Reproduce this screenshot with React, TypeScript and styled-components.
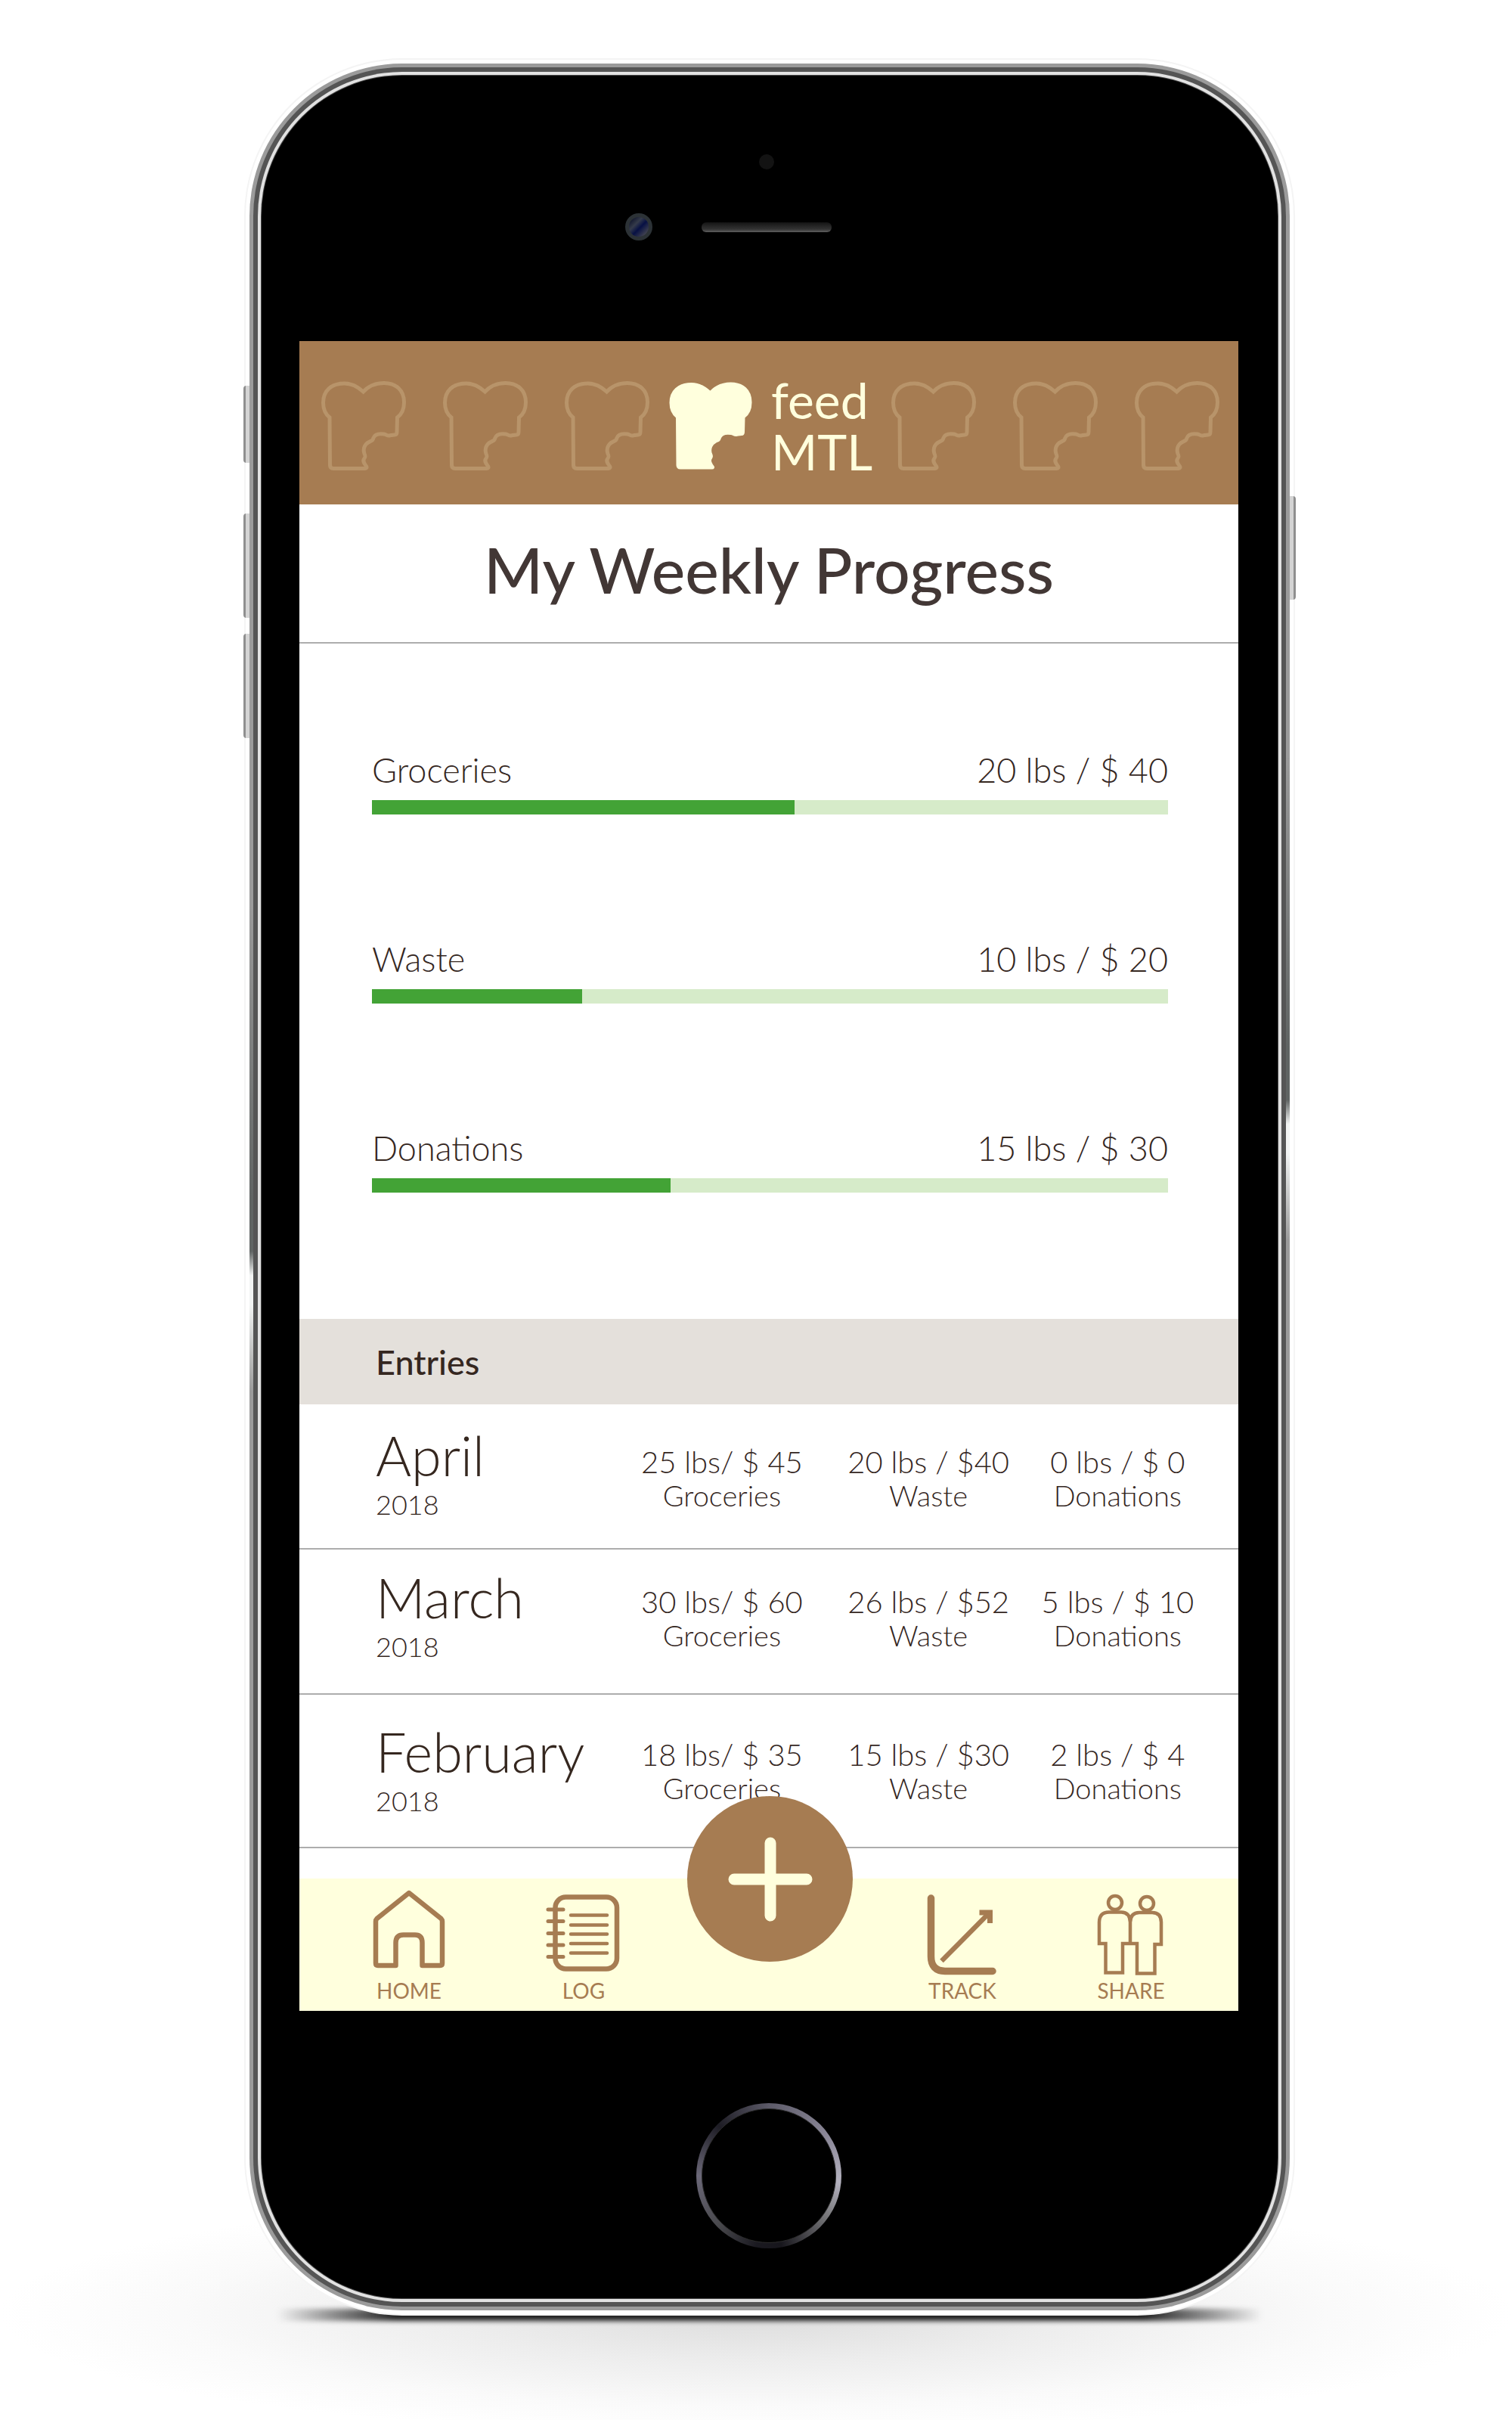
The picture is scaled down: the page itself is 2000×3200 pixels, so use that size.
import React from "react";
import styled, { createGlobalStyle, css } from "styled-components";

const colors = {
  brown: "#a67c52",
  crust: "#b8946a",
  cream: "#ffffdd",
  ink: "#35271f",
  title: "#423735",
  green: "#43a336",
  mint: "#d6ebc9",
  stone: "#e4e0db",
  line: "#adadad",
};

const GlobalStyle = createGlobalStyle`
  *, *::before, *::after { box-sizing: border-box; }
  body {
    margin: 0;
    background: #fff;
    color: ${colors.ink};
    font-family: Lato, "Open Sans", sans-serif;
    font-weight: 300;
  }
`;

const Page = styled.div`
  position: relative;
  overflow: hidden;
  display: flex;
  justify-content: center;
  padding: 100px 24px 161px 60px;
`;

const Floor = styled.div`
  position: absolute;
  left: 0;
  right: 0;
  bottom: 0;
  height: 320px;
  background: radial-gradient(ellipse 50% 50% at 50% 56%, #dcdcdc 0%, #ededed 40%, #fafafa 76%, #ffffff 100%);
`;

const Phone = styled.div`
  position: relative;
  width: 100%;
  max-width: 1344px;
`;

const ContactShadow = styled.div`
  position: absolute;
  left: 20px;
  right: 20px;
  bottom: -30px;
  height: 16px;
  background: linear-gradient(90deg, transparent, #222 12%, #222 88%, transparent);
  filter: blur(3px);
`;

const SideKey = styled.div<{ $side: "left" | "right"; $top: number; $length: number }>`
  position: absolute;
  top: ${(p) => p.$top}px;
  height: ${(p) => p.$length}px;
  width: 8px;
  background: linear-gradient(${(p) => (p.$side === "left" ? 90 : 270)}deg, #8f8f8f 38%, #d4d4d4 39%);
  ${(p) =>
    p.$side === "left"
      ? css`
          left: -24px;
          border-radius: 4px 0 0 4px;
        `
      : css`
          right: -24px;
          border-radius: 0 4px 4px 0;
        `}
`;

const EdgeGlint = styled.div<{ $side: "left" | "right"; $top: number }>`
  position: absolute;
  top: ${(p) => p.$top}px;
  ${(p) => p.$side}: -16px;
  width: 5px;
  height: 640px;
  background: linear-gradient(#9b9b9b 0%, #606463 60%, #606463 71%, #f2f4f3 76%, #f2f4f3 82%, #9b9b9b 100%);
`;

const Body = styled.div`
  position: relative;
  padding: 0 52px 0 50px;
  border-radius: 186px;
  background: #000;
  box-shadow:
    0 0 0 1px #4a4a4a,
    0 0 0 5px #e2e2e2,
    0 0 0 11px #555,
    0 0 0 16px #9b9b9b,
    0 0 0 21px #fff,
    0 0 0 23px #f4f4f4;
`;

const Forehead = styled.div`
  display: flex;
  flex-direction: column;
  align-items: center;
  gap: 58px;
  height: 351px;
  padding: 104px 6px 0 0;
`;

const Sensor = styled.div`
  width: 20px;
  height: 20px;
  border-radius: 50%;
  background: #131313;
`;

const EarpieceRow = styled.div`
  display: grid;
  grid-template-columns: 1fr 172px 1fr;
  align-items: center;
  column-gap: 65px;
  width: 100%;
`;

const Camera = styled.div`
  justify-self: end;
  width: 36px;
  height: 36px;
  border: 5px solid #2c3236;
  border-radius: 50%;
  background: linear-gradient(135deg, #10152c 10%, #353b4a 35%, #071044 55%, #4a4a52 90%);
`;

const Speaker = styled.div`
  height: 13px;
  border-radius: 6px;
  background: linear-gradient(#141414, #333 70%, #606060);
`;

const Chin = styled.div`
  display: flex;
  justify-content: center;
  height: 380px;
  padding-top: 122px;
`;

const HomeButton = styled.button`
  width: 192px;
  height: 192px;
  padding: 7px;
  border: 0;
  border-radius: 50%;
  background: conic-gradient(#5c5a68, #8f8c9c 60deg, #b4b2bf 95deg, #77777a 125deg, #17161c 170deg, #1a1920 190deg, #48484c 225deg, #6b6878 270deg, #1d1c24 315deg, #5c5a68);

  &::before {
    content: "";
    display: block;
    height: 100%;
    border: 1px solid #2c2c2c;
    border-radius: 50%;
    background: #000;
  }
`;

const Screen = styled.div`
  display: flex;
  flex-direction: column;
  background: #fff;
`;

const Header = styled.header`
  display: flex;
  align-items: center;
  justify-content: space-between;
  height: 216px;
  padding: 8px 25px 0 29px;
  background: ${colors.brown};
`;

const Loaves = styled.div`
  display: flex;
  gap: 49px;
`;

const Bread = styled.svg<{ $solid?: boolean }>`
  display: block;
  flex: none;
  width: 112px;
  height: 118px;
  fill: ${(p) => (p.$solid ? colors.cream : "none")};
  stroke: ${(p) => (p.$solid ? colors.cream : colors.crust)};
  stroke-width: ${(p) => (p.$solid ? 2 : 5)};
`;

const Brand = styled.a`
  display: flex;
  align-items: center;
  gap: 24px;
  color: ${colors.cream};
  font-size: 66px;
  font-weight: 400;
  line-height: 68px;
  text-decoration: none;
`;

const BrandWord = styled.span`
  display: block;
`;

const Title = styled.h1`
  display: flex;
  align-items: center;
  justify-content: center;
  height: 184px;
  margin: 0;
  padding-bottom: 12px;
  border-bottom: 2px solid ${colors.line};
  color: ${colors.title};
  font-size: 84px;
  font-weight: 500;
`;

const Goals = styled.section`
  display: flex;
  flex-direction: column;
  gap: 167px;
  padding: 143px 93px 167px 96px;
`;

const Goal = styled.div`
  display: flex;
  flex-direction: column;
  gap: 16px;
`;

const GoalText = styled.div`
  display: flex;
  justify-content: space-between;
  font-size: 45px;
  line-height: 48px;
`;

const Track = styled.div`
  height: 19px;
  background: ${colors.mint};
`;

const Fill = styled.div`
  height: 100%;
  background: ${colors.green};
`;

const EntriesHeading = styled.h2`
  margin: 0;
  padding: 2px 0 0 101px;
  background: ${colors.stone};
  font-size: 45px;
  font-weight: 500;
  line-height: 111px;
`;

const EntriesTable = styled.table`
  width: 100%;
  margin-bottom: 40px;
  border-spacing: 0;
  table-layout: fixed;
`;

const MonthCell = styled.th`
  width: 34%;
  height: 192px;
  padding: 20px 0 0 101px;
  border-bottom: 2px solid ${colors.line};
  font-weight: 300;
  text-align: left;
  vertical-align: top;

  tr:first-child > & {
    padding-top: 24px;
  }

  tr:last-child > & {
    height: 203px;
    padding-top: 32px;
  }
`;

const StatCell = styled.td`
  width: 22%;
  padding: 47px 0 0;
  border-bottom: 2px solid ${colors.line};
  text-align: center;
  vertical-align: top;

  &:last-child {
    padding-right: 46px;
  }

  tr:first-child > & {
    padding-top: 54px;
  }

  tr:last-child > & {
    padding-top: 57px;
  }
`;

const Month = styled.div`
  font-size: 72px;
  line-height: 86px;
`;

const Year = styled.div`
  font-size: 36px;
  line-height: 44px;
`;

const Amount = styled.div`
  font-size: 40px;
  line-height: 44px;
`;

const Kind = styled.div`
  font-size: 38px;
  line-height: 44px;
`;

const TabBar = styled.nav`
  display: grid;
  grid-template-columns: 200fr 262fr 230fr 280fr 166fr;
  height: 175px;
  padding: 0 59px 0 45px;
  background: ${colors.cream};
`;

const Tab = styled.a`
  display: flex;
  flex-direction: column;
  align-items: center;
  padding-top: 15px;
  color: ${colors.brown};
  font-size: 28px;
  font-weight: 400;
  line-height: 32px;
  text-decoration: none;
`;

const TabIcon = styled.svg`
  display: block;
  width: 104px;
  height: 117px;
  fill: none;
  stroke: currentColor;
`;

const AddSlot = styled.div`
  position: relative;
`;

const AddButton = styled.button`
  position: absolute;
  top: -109px;
  left: 50%;
  display: grid;
  place-items: center;
  width: 219px;
  height: 219px;
  margin-left: -109px;
  padding: 0;
  border: 0;
  border-radius: 50%;
  background: ${colors.brown};
`;

const PlusIcon = styled.svg`
  width: 112px;
  height: 112px;
  stroke: ${colors.cream};
  stroke-width: 15;
  stroke-linecap: round;
`;

function Loaf({ solid }: { solid?: boolean }) {
  return (
    <Bread $solid={solid} viewBox="0 0 112 118" aria-hidden="true">
      <path d="M55.5 14C49 8 41 3 30.5 3C13 3 2.500 13 2.500 28.500C2.500 37 6 44 11 48L11.500 111C11.500 114 13 115.500 16 115.500H58C60 115.500 60.500 114 59.500 112.500C56 108 54.500 105 57 102C58.500 100 58.500 99 57 96C54.500 89 58 83 63 80.500C67.500 78.500 68 78.500 69 75C71 69.500 76 69 83 70C86 70.500 87 72.500 90 72C93 71.500 94 71 97 71C99 71 100 70 100 67L100.500 48C106 44 109.500 37 109.500 28C109.500 12 99 2.500 82.500 2.500C71 2.500 62 7 55.500 14Z" />
    </Bread>
  );
}

const goals = [
  { name: "Groceries", amount: "20 lbs / $ 40", percent: 53.1 },
  { name: "Waste", amount: "10 lbs / $ 20", percent: 26.4 },
  { name: "Donations", amount: "15 lbs / $ 30", percent: 37.5 },
];

const entries = [
  { month: "April", year: "2018", stats: [["25 lbs/ $ 45", "Groceries"], ["20 lbs / $40", "Waste"], ["0 lbs / $ 0", "Donations"]] },
  { month: "March", year: "2018", stats: [["30 lbs/ $ 60", "Groceries"], ["26 lbs / $52", "Waste"], ["5 lbs / $ 10", "Donations"]] },
  { month: "February", year: "2018", stats: [["18 lbs/ $ 35", "Groceries"], ["15 lbs / $30", "Waste"], ["2 lbs / $ 4", "Donations"]] },
];

export default function App() {
  return (
    <>
      <GlobalStyle />
      <Page>
        <Floor />
        <Phone>
          <ContactShadow />
          <Body>
            <Forehead>
              <Sensor />
              <EarpieceRow>
                <Camera />
                <Speaker />
              </EarpieceRow>
            </Forehead>

            <Screen>
              <Header>
                <Loaves>
                  <Loaf />
                  <Loaf />
                  <Loaf />
                </Loaves>
                <Brand href="#">
                  <Loaf solid />
                  <span>
                    <BrandWord>feed</BrandWord>
                    <BrandWord>MTL</BrandWord>
                  </span>
                </Brand>
                <Loaves>
                  <Loaf />
                  <Loaf />
                  <Loaf />
                </Loaves>
              </Header>

              <main>
                <Title>My Weekly Progress</Title>

                <Goals>
                  {goals.map((goal) => (
                    <Goal key={goal.name}>
                      <GoalText>
                        <span>{goal.name}</span>
                        <span>{goal.amount}</span>
                      </GoalText>
                      <Track role="progressbar" aria-label={goal.name} aria-valuenow={goal.percent}>
                        <Fill style={{ width: `${goal.percent}%` }} />
                      </Track>
                    </Goal>
                  ))}
                </Goals>

                <EntriesHeading id="entries">Entries</EntriesHeading>
                <EntriesTable aria-labelledby="entries">
                  <tbody>
                    {entries.map((entry) => (
                      <tr key={entry.month}>
                        <MonthCell scope="row">
                          <Month>{entry.month}</Month>
                          <Year>{entry.year}</Year>
                        </MonthCell>
                        {entry.stats.map(([amount, kind]) => (
                          <StatCell key={kind}>
                            <Amount>{amount}</Amount>
                            <Kind>{kind}</Kind>
                          </StatCell>
                        ))}
                      </tr>
                    ))}
                  </tbody>
                </EntriesTable>
              </main>

              <TabBar>
                <Tab href="#home">
                  <TabIcon viewBox="0 0 104 117" strokeWidth="6.500" strokeLinejoin="round" aria-hidden="true">
                    <path d="M52 4L9.500 38Q8 39.500 8 42V97Q8 100 11 100H34.500V70Q34.500 59.500 44.500 59.500H60Q69.500 59.500 69.500 70V100H93Q96 100 96 97V42Q96 39.500 94.500 38Z" />
                  </TabIcon>
                  HOME
                </Tab>
                <Tab href="#log">
                  <TabIcon viewBox="0 0 104 117" strokeLinecap="round" aria-hidden="true">
                    <rect x="14.500" y="9.500" width="81.500" height="95" rx="14" strokeWidth="6.500" />
                    <path strokeWidth="5" d="M5 26H25M5 41.500H25M5 57.500H25M5 73H25M5 88.500H25" />
                    <path strokeWidth="4.500" d="M35 33.500H83M35 46.500H83M35 58.500H83M35 71H83M35 83.500H83" />
                  </TabIcon>
                  LOG
                </Tab>
                <AddSlot>
                  <AddButton type="button" aria-label="Add entry">
                    <PlusIcon viewBox="0 0 112 112" aria-hidden="true">
                      <path d="M56 8V104M8 56H104" />
                    </PlusIcon>
                  </AddButton>
                </AddSlot>
                <Tab href="#track">
                  <TabIcon viewBox="0 0 104 117" aria-hidden="true">
                    <path strokeWidth="9.500" strokeLinecap="round" d="M10.500 11V88Q10.500 107 29 107.500H92" />
                    <path strokeWidth="6.500" d="M24.500 94L88 30" />
                    <path strokeWidth="7" d="M74.500 30H88.500V44" />
                  </TabIcon>
                  TRACK
                </Tab>
                <Tab href="#share">
                  <TabIcon viewBox="0 0 104 117" strokeWidth="4.500" aria-hidden="true">
                    <circle cx="31" cy="17" r="9" />
                    <circle cx="73" cy="18" r="9" />
                    <path d="M51 71V44Q51 29.500 39 29.500H23Q10 29.500 10 43V71H18.500V109.500H41V71H60V110.500H83.500V72H92V43Q92 30 80 30H63Q51 30 51 44" />
                  </TabIcon>
                  SHARE
                </Tab>
              </TabBar>
            </Screen>

            <Chin>
              <HomeButton type="button" aria-label="Home" />
            </Chin>
          </Body>
          <EdgeGlint $side="left" $top={1100} />
          <EdgeGlint $side="right" $top={900} />
          <SideKey $side="left" $top={410} $length={102} />
          <SideKey $side="left" $top={579} $length={138} />
          <SideKey $side="left" $top={738} $length={138} />
          <SideKey $side="right" $top={556} $length={137} />
        </Phone>
      </Page>
    </>
  );
}
